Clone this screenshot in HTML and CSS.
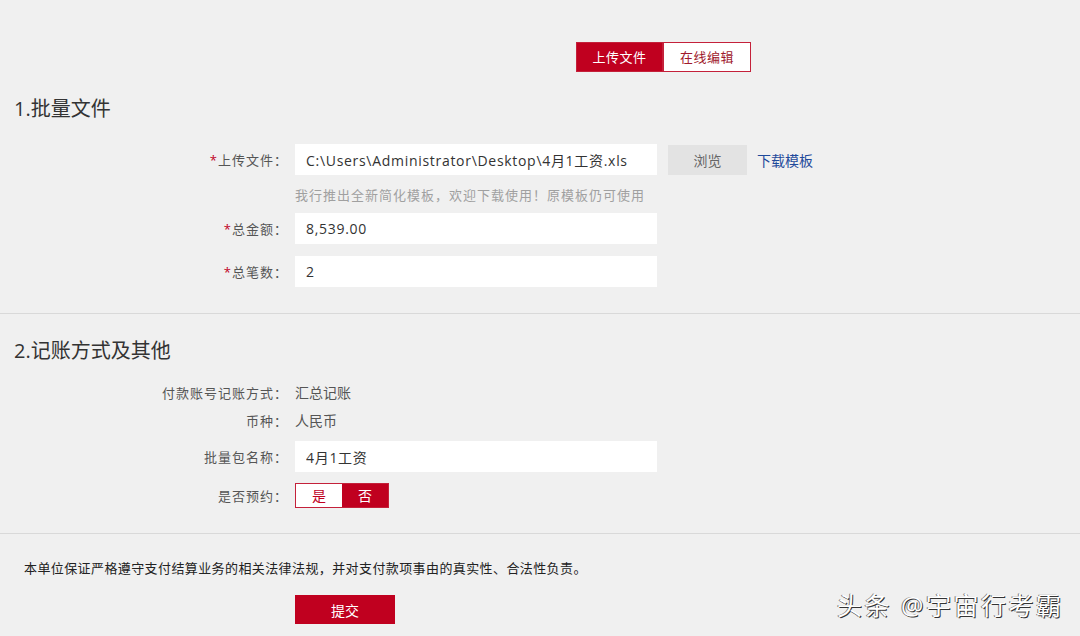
FILE: index.html
```html
<!DOCTYPE html>
<html lang="zh">
<head>
    <meta charset="UTF-8">
    <title>批量代发</title>
    <link rel="stylesheet" href="styles.css">
</head>
<body>
    <div class="tabs">
        <span class="tab active">上传文件</span>
        <span class="tab">在线编辑</span>
    </div>

    <div class="sec">
        <h2 class="secTitle">1.批量文件</h2>
        <div class="row first">
            <span class="lbl"><i>*</i>上传文件：</span>
            <input class="fld" type="text" value="C:\Users\Administrator\Desktop\4月1工资.xls">
            <button type="button" class="browse">浏览</button>
            <a class="link" href="#">下载模板</a>
        </div>
        <p class="hint">我行推出全新简化模板，欢迎下载使用！原模板仍可使用</p>
        <div class="row r2">
            <span class="lbl"><i>*</i>总金额：</span>
            <input class="fld" type="text" value="8,539.00">
        </div>
        <div class="row r3">
            <span class="lbl"><i>*</i>总笔数：</span>
            <input class="fld" type="text" value="2">
        </div>
    </div>

    <div class="sec">
        <h2 class="secTitle">2.记账方式及其他</h2>
        <div class="row txt first2">
            <span class="lbl">付款账号记账方式：</span>
            <span class="val">汇总记账</span>
        </div>
        <div class="row txt t2">
            <span class="lbl">币种：</span>
            <span class="val">人民币</span>
        </div>
        <div class="row r4">
            <span class="lbl">批量包名称：</span>
            <input class="fld" type="text" value="4月1工资">
        </div>
        <div class="row r5">
            <span class="lbl">是否预约：</span>
            <div class="yn">
                <span class="ynBtn">是</span>
                <span class="ynBtn on">否</span>
            </div>
        </div>
    </div>

    <p class="promise">本单位保证严格遵守支付结算业务的相关法律法规，并对支付款项事由的真实性、合法性负责。</p>
    <button type="button" class="submit">提交</button>

    <div class="mark">头条 @宇宙行考霸</div>
</body>
</html>
```

FILE: styles.css
```css
*{
    box-sizing: border-box;
}
body{
    margin: 0;
    background: #f0f0f0;
    font-family: "Open Sans", "Noto Sans CJK SC", sans-serif;
    color: #555;
    font-size: 13px;
    height: 636px;
    overflow: hidden;
    position: relative;
}
.tabs{
    display: flex;
    padding: 42px 0 0 576px;
}
.tab{
    width: 88px;
    height: 30px;
    line-height: 28px;
    text-align: center;
    border: 1px solid #c4213a;
    background: #fff;
    color: #a01a2c;
    font-size: 13px;
    letter-spacing: 0.5px;
}
.tab.active{
    width: 87px;
    background: #c0001f;
    color: #fff;
}
.sec{
    border-bottom: 1px solid #d9d9d9;
    padding-bottom: 26px;
}
.sec + .sec{
    padding-bottom: 25px;
}
.secTitle{
    margin: 25px 0 0;
    padding-left: 14px;
    font-size: 20px;
    line-height: 24px;
    font-weight: normal;
    color: #333;
}
.row{
    display: flex;
    align-items: center;
}
.lbl{
    width: 295px;
    padding-right: 7px;
    text-align: right;
    color: #555;
    letter-spacing: 1px;
}
.lbl i{
    font-style: normal;
    color: #c0001f;
}
.fld{
    width: 362px;
    height: 31px;
    border: none;
    background: #fff;
    padding: 0 11px;
    font-family: inherit;
    font-size: 14px;
    letter-spacing: 0.7px;
    color: #333;
    outline: none;
}
.browse{
    width: 79px;
    height: 30px;
    margin-left: 11px;
    border: none;
    background: #e3e3e3;
    color: #666;
    font-family: inherit;
    font-size: 14px;
}
.link{
    margin-left: 10px;
    color: #1f4a9b;
    text-decoration: none;
    font-size: 14px;
}
.first{
    margin-top: 23px;
}
.hint{
    margin: 10px 0 0 295px;
    line-height: 20px;
    color: #a0a0a0;
    letter-spacing: 1px;
}
.r2{
    margin-top: 8px;
}
.r3{
    margin-top: 12px;
}
.txt{
    line-height: 20px;
}
.val{
    color: #555;
    font-size: 14px;
}
.first2{
    margin-top: 20px;
}
.t2{
    margin-top: 8px;
}
.r4{
    margin-top: 10px;
}
.r5{
    margin-top: 11px;
}
.yn{
    display: flex;
    border: 1px solid #c4213a;
    height: 25px;
}
.ynBtn{
    width: 46px;
    line-height: 23px;
    text-align: center;
    background: #fff;
    color: #c0001f;
    font-size: 14px;
}
.ynBtn.on{
    background: #c0001f;
    color: #fff;
}
.promise{
    margin: 24px 0 0 24px;
    line-height: 20px;
    color: #222;
    letter-spacing: 0.4px;
}
.submit{
    display: block;
    margin: 17px 0 0 295px;
    width: 100px;
    height: 29px;
    border: none;
    background: #c0001f;
    color: #fff;
    font-family: inherit;
    font-size: 14px;
}
.mark{
    position: absolute;
    left: 837px;
    top: 586px;
    font-size: 25px;
    letter-spacing: 2.5px;
    color: #fff;
    text-shadow: 1px 1px 0 #333, -1px 0 0 #777;
}
```
